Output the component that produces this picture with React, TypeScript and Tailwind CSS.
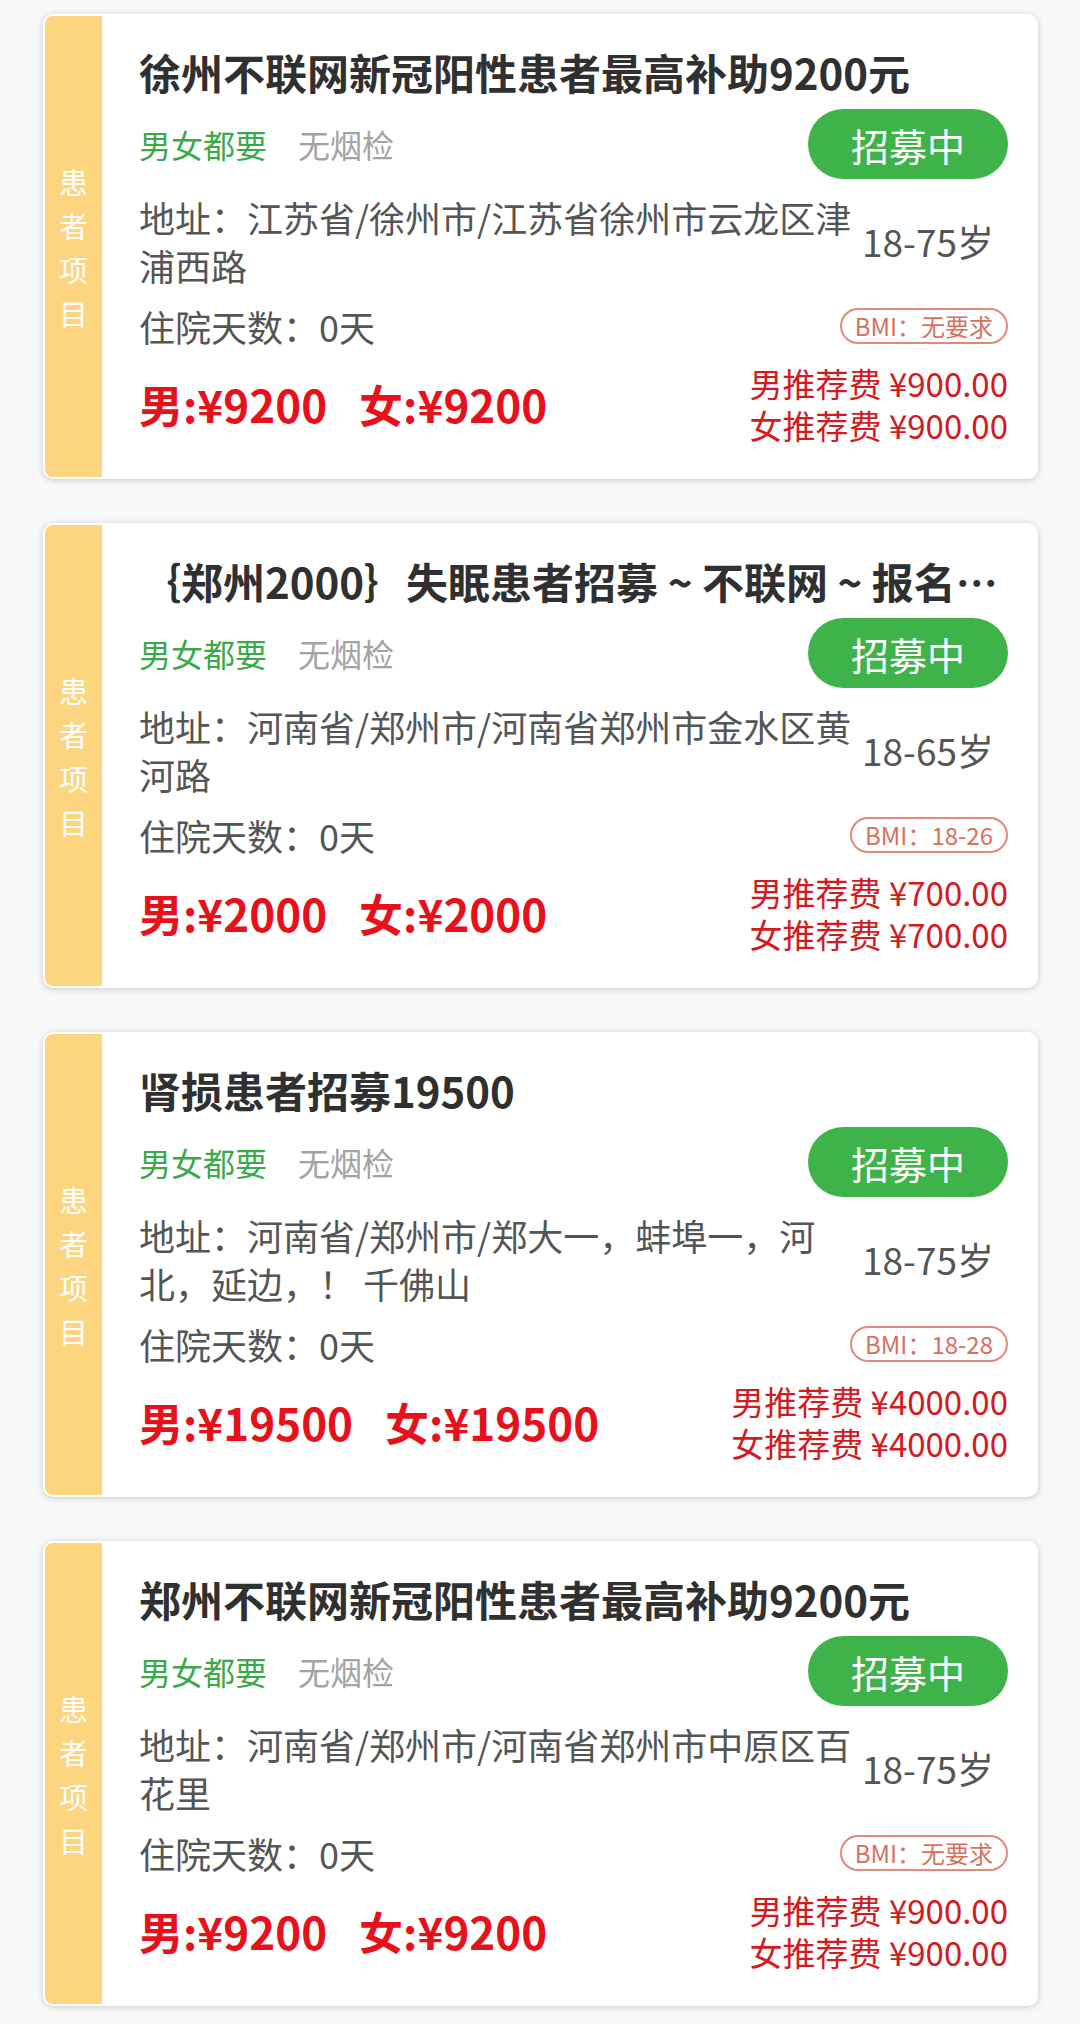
import React from "react";

type CardData = {
  title: string;
  address: string;
  age: string;
  bmi: string;
  price: string;
  fee: string;
};

const cards: CardData[] = [
  {
    title: "徐州不联网新冠阳性患者最高补助9200元",
    address: "地址：江苏省/徐州市/江苏省徐州市云龙区津浦西路",
    age: "18-75岁",
    bmi: "无要求",
    price: "9200",
    fee: "900.00",
  },
  {
    title: "｛郑州2000｝失眠患者招募 ~ 不联网 ~ 报名参加",
    address: "地址：河南省/郑州市/河南省郑州市金水区黄河路",
    age: "18-65岁",
    bmi: "18-26",
    price: "2000",
    fee: "700.00",
  },
  {
    title: "肾损患者招募19500",
    address: "地址：河南省/郑州市/郑大一，蚌埠一，河北，延边，！ 千佛山",
    age: "18-75岁",
    bmi: "18-28",
    price: "19500",
    fee: "4000.00",
  },
  {
    title: "郑州不联网新冠阳性患者最高补助9200元",
    address: "地址：河南省/郑州市/河南省郑州市中原区百花里",
    age: "18-75岁",
    bmi: "无要求",
    price: "9200",
    fee: "900.00",
  },
];

function Card({ c }: { c: CardData }) {
  return (
    <div className="flex h-[465px] rounded-[10px] bg-white p-[2px] shadow-[0_1px_6px_rgba(0,0,0,0.2)]">
      <div className="flex w-[57px] shrink-0 flex-col items-center justify-center rounded-l-[8px] bg-[#fdd57e] text-[29px] leading-[44px] text-white">
        {"患者项目".split("").map((ch, i) => (
          <span key={i}>{ch}</span>
        ))}
      </div>
      <div className="flex min-w-0 flex-1 flex-col pl-[37px] pr-[28px] pt-[24px]">
        <div className="overflow-hidden text-ellipsis whitespace-nowrap py-[2px] text-[42px] font-bold leading-[60px] text-[#303030]">
          {c.title}
        </div>
        <div className="mt-[5px] flex h-[70px] items-center justify-between">
          <div className="flex gap-[31px] text-[32px] leading-[44px]">
            <span className="text-[#3aa94a]">男女都要</span>
            <span className="text-[#a3a3a3]">无烟检</span>
          </div>
          <div className="flex h-[70px] w-[200px] items-center justify-center rounded-full bg-[#3db34a] text-[38px] text-white">
            招募中
          </div>
        </div>
        <div className="mt-[14px] flex items-center">
          <div className="min-w-0 flex-1 text-[36px] leading-[48px] text-[#555555]">
            {c.address}
          </div>
          <div className="w-[150px] shrink-0 pl-[4px] text-[37px] leading-[48px] text-[#555555]">
            {c.age}
          </div>
        </div>
        <div className="mt-[13px] flex h-[48px] items-center justify-between">
          <div className="text-[36px] leading-[48px] text-[#555555]">住院天数：0天</div>
          <div className="flex h-[36px] items-center rounded-full border-2 border-[#e28a7a] px-[13px] text-[24px] leading-none text-[#d9705e]">
            BMI：{c.bmi}
          </div>
        </div>
        <div className="mt-[12px] flex items-center justify-between">
          <div className="flex gap-[32px] text-[44px] font-bold leading-[56px] text-[#e8101a]">
            <span>男:¥{c.price}</span>
            <span>女:¥{c.price}</span>
          </div>
          <div className="text-right text-[33px] leading-[42px] text-[#d41920]">
            <div>男推荐费 ¥{c.fee}</div>
            <div>女推荐费 ¥{c.fee}</div>
          </div>
        </div>
      </div>
    </div>
  );
}

export default function App() {
  return (
    <div
      className="min-h-[2024px] w-[1080px] bg-[#f8f8f8] pl-[43px] pr-[42px] pt-[14px]"
      style={{ fontFamily: "'Noto Sans CJK SC', 'Noto Sans', sans-serif" }}
    >
      <div className="flex flex-col gap-[44px]">
        {cards.map((c, i) => (
          <Card key={i} c={c} />
        ))}
      </div>
    </div>
  );
}
